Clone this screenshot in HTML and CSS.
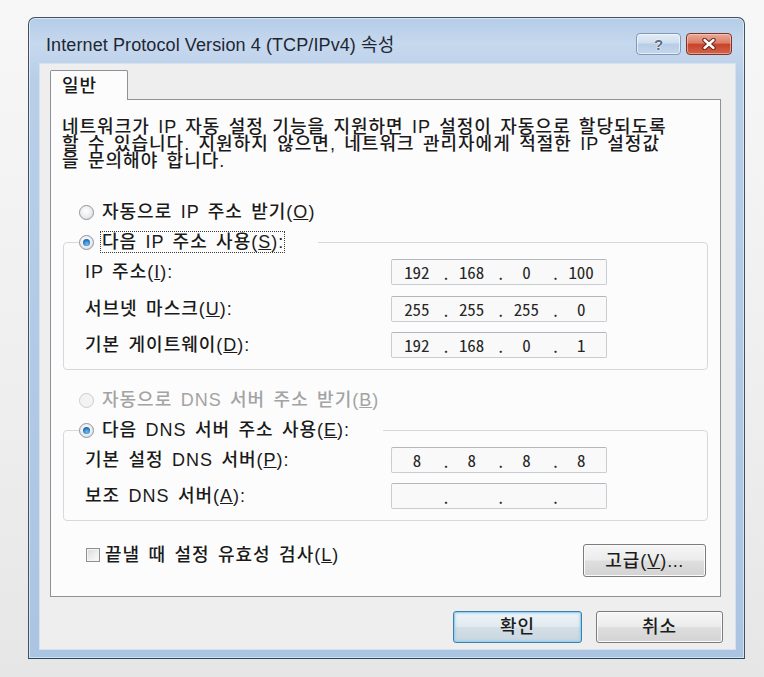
FILE: index.html
```html
<!DOCTYPE html>
<html lang="ko">
<head>
<meta charset="utf-8">
<title>Internet Protocol Version 4 (TCP/IPv4) 속성</title>
<link rel="stylesheet" href="styles.css">
</head>
<body>
<div class="window">
  <div class="titlebar">
    <div class="title">Internet Protocol Version 4 (TCP/IPv4) 속성</div>
    <div class="caption-btns">
      <div class="cbtn help"><span>?</span></div>
      <div class="cbtn close">
        <svg width="18" height="12" viewBox="0 0 18 12"><path d="M4.5 2 L13.5 10 M13.5 2 L4.5 10" stroke="#6a2418" stroke-width="4.4" stroke-linecap="round"/><path d="M4.5 2 L13.5 10 M13.5 2 L4.5 10" stroke="#ffffff" stroke-width="2.4" stroke-linecap="round"/></svg>
      </div>
    </div>
  </div>
  <div class="client">
    <div class="tabstrip"><div class="tab">일반</div></div>
    <div class="panel">
      <p class="desc">네트워크가 IP 자동 설정 기능을 지원하면 IP 설정이 자동으로 할당되도록<br>할 수 있습니다. 지원하지 않으면, 네트워크 관리자에게 적절한 IP 설정값<br>을 문의해야 합니다.</p>

      <div class="option opt-ip"><span class="radio"></span><span class="lbl">자동으로 IP 주소 받기(<u>O</u>)</span></div>
      <fieldset class="group group-ip">
        <legend class="legend legend-ip"><span class="radio checked"></span><span class="lbl focus">다음 IP 주소 사용(<u>S</u>):</span></legend>
        <div class="rows">
          <div class="field"><span class="flabel">IP 주소(<u>I</u>):</span><div class="ipbox"><span>192</span><i>.</i><span>168</span><i>.</i><span>0</span><i>.</i><span>100</span></div></div>
          <div class="field"><span class="flabel">서브넷 마스크(<u>U</u>):</span><div class="ipbox"><span>255</span><i>.</i><span>255</span><i>.</i><span>255</span><i>.</i><span>0</span></div></div>
          <div class="field"><span class="flabel">기본 게이트웨이(<u>D</u>):</span><div class="ipbox"><span>192</span><i>.</i><span>168</span><i>.</i><span>0</span><i>.</i><span>1</span></div></div>
        </div>
      </fieldset>

      <div class="option opt-dns disabled"><span class="radio"></span><span class="lbl">자동으로 DNS 서버 주소 받기(<u>B</u>)</span></div>
      <fieldset class="group group-dns">
        <legend class="legend legend-dns"><span class="radio checked"></span><span class="lbl">다음 DNS 서버 주소 사용(<u>E</u>):</span></legend>
        <div class="rows">
          <div class="field"><span class="flabel">기본 설정 DNS 서버(<u>P</u>):</span><div class="ipbox"><span>8</span><i>.</i><span>8</span><i>.</i><span>8</span><i>.</i><span>8</span></div></div>
          <div class="field"><span class="flabel">보조 DNS 서버(<u>A</u>):</span><div class="ipbox"><span></span><i>.</i><span></span><i>.</i><span></span><i>.</i><span></span></div></div>
        </div>
      </fieldset>

      <div class="bottom-row">
        <div class="check"><span class="checkbox"></span><span class="lbl">끝낼 때 설정 유효성 검사(<u>L</u>)</span></div>
        <div class="btn advanced">고급(<u>V</u>)<span class="dots">...</span></div>
      </div>
    </div>
    <div class="dialog-buttons">
      <div class="btn default">확인</div>
      <div class="btn">취소</div>
    </div>
  </div>
</div>
</body>
</html>
```

FILE: styles.css
```css
* { box-sizing: border-box; }

body {
  margin: 0;
  width: 764px;
  height: 677px;
  overflow: hidden;
  background: linear-gradient(180deg, #f7f7f7 0%, #eeeeee 60%, #e6e6e6 100%);
  font-family: "Liberation Sans", "Noto Sans CJK KR", sans-serif;
  color: #1a1a1a;
}

.window {
  margin: 17px 0 0 28px;
  width: 717px;
  height: 642px;
  border: 1px solid #3f5163;
  border-bottom-color: #1e4b5e;
  border-radius: 7px 7px 0 0;
  background: linear-gradient(180deg, #b5cce7 0px, #c6d8ee 26px, #b9cfe8 60px, #aac4e2 100%);
  box-shadow: inset 0 0 0 1px rgba(255, 255, 255, 0.5);
  padding: 0 9px 9px 11px;
  display: flex;
  flex-direction: column;
}

.titlebar {
  height: 46px;
  display: flex;
  align-items: flex-start;
}

.title {
  flex: 1;
  font-family: "Liberation Sans", "Noto Sans CJK KR", sans-serif;
  font-size: 18px;
  letter-spacing: 0.1px;
  line-height: 20px;
  padding: 17px 0 0 6px;
  color: #1d2733;
  white-space: nowrap;
}

.caption-btns {
  display: flex;
  gap: 5px;
  margin: 15px 3px 0 0;
}

.cbtn {
  height: 22px;
  border-radius: 4px;
  display: flex;
  align-items: center;
  justify-content: center;
}

.help {
  width: 45px;
  border: 1px solid #7f98b6;
  background: linear-gradient(180deg, #e2ecf7 0%, #cfdeef 45%, #b7cce6 50%, #c3d6ec 100%);
  box-shadow: inset 0 0 0 1px rgba(255, 255, 255, 0.6);
}

.help span {
  font-family: "Liberation Sans", sans-serif;
  font-weight: bold;
  font-size: 15px;
  line-height: 15px;
  color: #5c6d82;
  text-shadow: 0 0 2px #ffffff, 0 0 1px #ffffff;
}

.close {
  width: 46px;
  border: 1px solid #7c3527;
  background: linear-gradient(180deg, #eaa999 0%, #dc7d66 45%, #c8432a 52%, #d2644a 100%);
  box-shadow: inset 0 0 0 1px rgba(255, 220, 210, 0.5);
}

.client {
  flex: 1;
  background: #eeeeee;
  box-shadow: 0 0 0 1px #d5e1ee;
  padding: 6px 14px 0 10px;
  display: flex;
  flex-direction: column;
  font-weight: 500;
  font-size: 18px;
  letter-spacing: 1px;
  word-spacing: 2.4px;
}

.tabstrip {
  height: 29px;
  display: flex;
  align-items: flex-end;
}

.tab {
  position: relative;
  z-index: 1;
  width: 78px;
  height: 30px;
  margin-bottom: -1px;
  background: #fcfcfc;
  border: 1px solid #8e9197;
  border-bottom: none;
  border-radius: 2px 2px 0 0;
  padding: 5px 0 0 11px;
  line-height: 20px;
}

.panel {
  height: 498px;
  background: #fcfcfc;
  border: 1px solid #8e9197;
  display: flex;
  flex-direction: column;
}

.desc {
  margin: 19px 0 0 11px;
  line-height: 17px;
  white-space: nowrap;
}

.option {
  display: flex;
  align-items: center;
  height: 20px;
  margin-left: 28px;
}

.opt-ip { margin-top: 32px; }
.opt-dns { margin-top: 20px; }

.radio {
  position: relative;
  flex: none;
  width: 15px;
  height: 15px;
  border-radius: 50%;
  border: 1px solid #8c959e;
  background: radial-gradient(circle at 45% 40%, #ffffff 0%, #ececec 55%, #d4d4d4 100%);
  margin-right: 7px;
}

.radio.checked::after {
  content: "";
  position: absolute;
  left: 3px;
  top: 3px;
  width: 7px;
  height: 7px;
  border-radius: 50%;
  background: radial-gradient(circle at 55% 70%, #69c3f7 0%, #2a78c4 55%, #17488a 100%);
}

.disabled { color: #a3a3a3; }
.disabled .radio {
  border-color: #c9cdd1;
  background: #f3f3f3;
}

.lbl {
  line-height: 20px;
  white-space: nowrap;
  padding: 0 0 0 1px;
}

.lbl.focus {
  outline: 1px dotted #3a3a3a;
  outline-offset: 0;
}

.group {
  margin: 10px 12px 0 12px;
  padding: 0 0 11px 0;
  border: 1px solid #d5d9dd;
  border-radius: 4px;
  min-width: 0;
}

.legend {
  display: flex;
  align-items: center;
  height: 20px;
  padding: 0;
  margin-left: 15px;
}

.legend-ip { width: 239px; }
.legend-dns { width: 304px; }

.rows {
  display: flex;
  flex-direction: column;
  gap: 10.5px;
  margin-top: 7px;
}

.group-dns .rows { gap: 10px; }

.field {
  display: flex;
  align-items: center;
  height: 26px;
  padding-left: 21px;
}

.flabel {
  width: 306px;
  white-space: nowrap;
  line-height: 20px;
}

.ipbox {
  width: 216px;
  height: 26px;
  border: 1px solid #c9ccd1;
  border-top-color: #b3b6bc;
  border-radius: 2px;
  background: #f9f9f9;
  display: grid;
  grid-template-columns: 1fr 5px 1fr 5px 1fr 5px 1fr;
  align-items: center;
  text-align: center;
  font-family: "Noto Sans CJK KR", sans-serif;
  font-feature-settings: "hwid" 1;
  font-size: 17px;
  font-weight: 400;
  letter-spacing: 0;
  line-height: 20px;
  color: #262626;
  word-spacing: 0;
}

.ipbox i {
  font-style: normal;
  text-align: center;
  position: relative;
  top: 1px;
}

.bottom-row {
  display: flex;
  align-items: flex-start;
  justify-content: space-between;
  margin: 23px 14px 0 35px;
}

.check {
  display: flex;
  align-items: center;
  margin-top: 1px;
}

.checkbox {
  width: 14px;
  height: 14px;
  border: 1px solid #8e8f8f;
  background: linear-gradient(135deg, #d8d8d8 0%, #f0f0f0 60%, #fafafa 100%);
  box-shadow: inset 0 0 0 1px #f4f4f4;
  margin-right: 4px;
}

.btn {
  display: flex;
  align-items: center;
  justify-content: center;
  height: 33px;
  border: 1px solid #7c7c7c;
  border-radius: 3px;
  background: linear-gradient(180deg, #f6f6f6 0%, #ececec 48%, #dedede 52%, #d3d3d3 100%);
  box-shadow: inset 0 0 0 1px #fbfbfb;
  line-height: 20px;
  color: #1c1c1c;
  width: 127px;
}

.btn .dots { letter-spacing: 0.5px; }

.advanced { width: 123px; }

.dialog-buttons {
  display: flex;
  justify-content: flex-end;
  gap: 14px;
  margin: 14px -2px 0 0;
}

.dialog-buttons .btn { height: 32px; }

.btn.default {
  width: 129px;
  border-color: #3f7fae;
  background: linear-gradient(180deg, #eef4f8 0%, #e2eaf0 48%, #d3dee6 52%, #cad7e0 100%);
  box-shadow: inset 0 0 0 1px #98d0ef, inset 0 0 2px 2px rgba(120, 195, 235, 0.35);
}
```
